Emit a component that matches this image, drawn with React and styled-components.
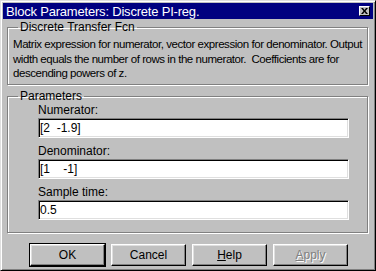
import React from 'react';
import styled, { createGlobalStyle } from 'styled-components';

const Global = createGlobalStyle`
  html, body { margin: 0; padding: 0; background: #c0c0c0; }
  body { font-family: "Liberation Sans", Arial, sans-serif; }
`;

const Window = styled.div`
  box-sizing: border-box;
  width: 376px;
  height: 271px;
  background: #c0c0c0;
  border-top: 1px solid #dfdfdf;
  border-left: 1px solid #dfdfdf;
  border-right: 1px solid #000;
  border-bottom: 1px solid #000;
  box-shadow: inset 1px 1px 0 #fff, inset -1px -1px 0 #808080;
  padding: 2px;
  display: flex;
  flex-direction: column;
  font-family: "Liberation Sans", Arial, sans-serif;
  font-size: 12px;
  color: #000;
`;

const TitleBar = styled.div`
  height: 16px;
  flex: none;
  background: #000080;
  color: #fff;
  display: flex;
  align-items: center;
  justify-content: space-between;
  padding: 0 3px 0 3px;
  font-size: 13px;
  letter-spacing: -0.2px;
`;

const CloseButton = styled.div`
  box-sizing: border-box;
  width: 11px;
  height: 10px;
  background: #c0c0c0;
  border-top: 1px solid #fff;
  border-left: 1px solid #fff;
  border-right: 1px solid #000;
  border-bottom: 1px solid #000;
  display: flex;
  align-items: center;
  justify-content: center;
`;

const Content = styled.div`
  flex: 1;
  display: flex;
  flex-direction: column;
  padding: 2px 4px 0 4px;
`;

const GroupBox = styled.fieldset`
  margin: ${p => p.$top}px 0 0 0;
  padding: ${p => p.$pad};
  border: 1px solid #808080;
  box-shadow: inset 1px 1px 0 #fff, 1px 1px 0 #fff;
  width: 361px;
  box-sizing: border-box;
  min-width: 0;
`;

const Legend = styled.legend`
  padding: 0 2px;
  margin-left: 5px;
  font-size: 12px;
  line-height: 13px;
`;

const Description = styled.p`
  margin: 0;
  font-size: 11.5px;
  line-height: 14.5px;
  letter-spacing: -0.45px;
  white-space: nowrap;
`;

const FieldList = styled.div`
  display: flex;
  flex-direction: column;
  padding-left: 25px;
`;

const FieldLabel = styled.label`
  display: block;
  font-size: 12px;
  line-height: 13px;
  margin-top: ${p => p.$top}px;
`;

const TextInput = styled.input`
  box-sizing: border-box;
  width: 311px;
  height: 20px;
  margin: 1px 0 0 0;
  padding: 0 1px;
  background: #fff;
  border-top: 1px solid #808080;
  border-left: 1px solid #808080;
  border-right: 1px solid #fff;
  border-bottom: 1px solid #fff;
  box-shadow: inset 1px 1px 0 #000, inset -1px -1px 0 #dfdfdf;
  font-family: "Liberation Sans", Arial, sans-serif;
  font-size: 12px;
  color: #000;
  outline: none;
`;

const ButtonRow = styled.div`
  display: flex;
  gap: 6px;
  padding-left: 23px;
  margin-top: 11px;
`;

const Button = styled.button`
  box-sizing: border-box;
  width: 75px;
  height: 22px;
  padding: 0;
  background: #c0c0c0;
  font-family: "Liberation Sans", Arial, sans-serif;
  font-size: 12px;
  color: ${p => (p.disabled ? '#808080' : '#000')};
  text-shadow: ${p => (p.disabled ? '1px 1px 0 #fff' : 'none')};
  border-top: 1px solid #fff;
  border-left: 1px solid #fff;
  border-right: 1px solid #000;
  border-bottom: 1px solid #000;
  box-shadow: inset -1px -1px 0 #808080, inset 1px 1px 0 #dfdfdf;
  outline: ${p => (p.$default ? '1px solid #000' : 'none')};
`;

const Mnemonic = styled.span`
  text-decoration: underline;
`;

export default function App() {
  return (
    <>
      <Global />
      <Window>
        <TitleBar>
          <span>Block Parameters: Discrete PI-reg.</span>
          <CloseButton>
            <svg width="7" height="6" viewBox="0 0 7 6">
              <path d="M0 0 L2 0 L3.5 2 L5 0 L7 0 L4.5 3 L7 6 L5 6 L3.5 4 L2 6 L0 6 L2.5 3 Z" fill="#000" />
            </svg>
          </CloseButton>
        </TitleBar>
        <Content>
          <GroupBox $top={0} $pad="3px 1px 3px 5px">
            <Legend>Discrete Transfer Fcn</Legend>
            <Description>
              Matrix expression for numerator, vector expression for denominator. Output
              <br />
              width equals the number of rows in the numerator.&nbsp; Coefficients are for
              <br />
              descending powers of z.
            </Description>
          </GroupBox>
          <GroupBox $top={5} $pad="0 5px 12px 5px">
            <Legend>Parameters</Legend>
            <FieldList>
              <FieldLabel $top={1}>Numerator:</FieldLabel>
              <TextInput defaultValue="[2  -1.9]" />
              <FieldLabel $top={7}>Denominator:</FieldLabel>
              <TextInput defaultValue="[1    -1]" />
              <FieldLabel $top={7}>Sample time:</FieldLabel>
              <TextInput defaultValue="0.5" />
            </FieldList>
          </GroupBox>
          <ButtonRow>
            <Button $default>OK</Button>
            <Button>Cancel</Button>
            <Button><Mnemonic>H</Mnemonic>elp</Button>
            <Button disabled><Mnemonic>A</Mnemonic>pply</Button>
          </ButtonRow>
        </Content>
      </Window>
    </>
  );
}
